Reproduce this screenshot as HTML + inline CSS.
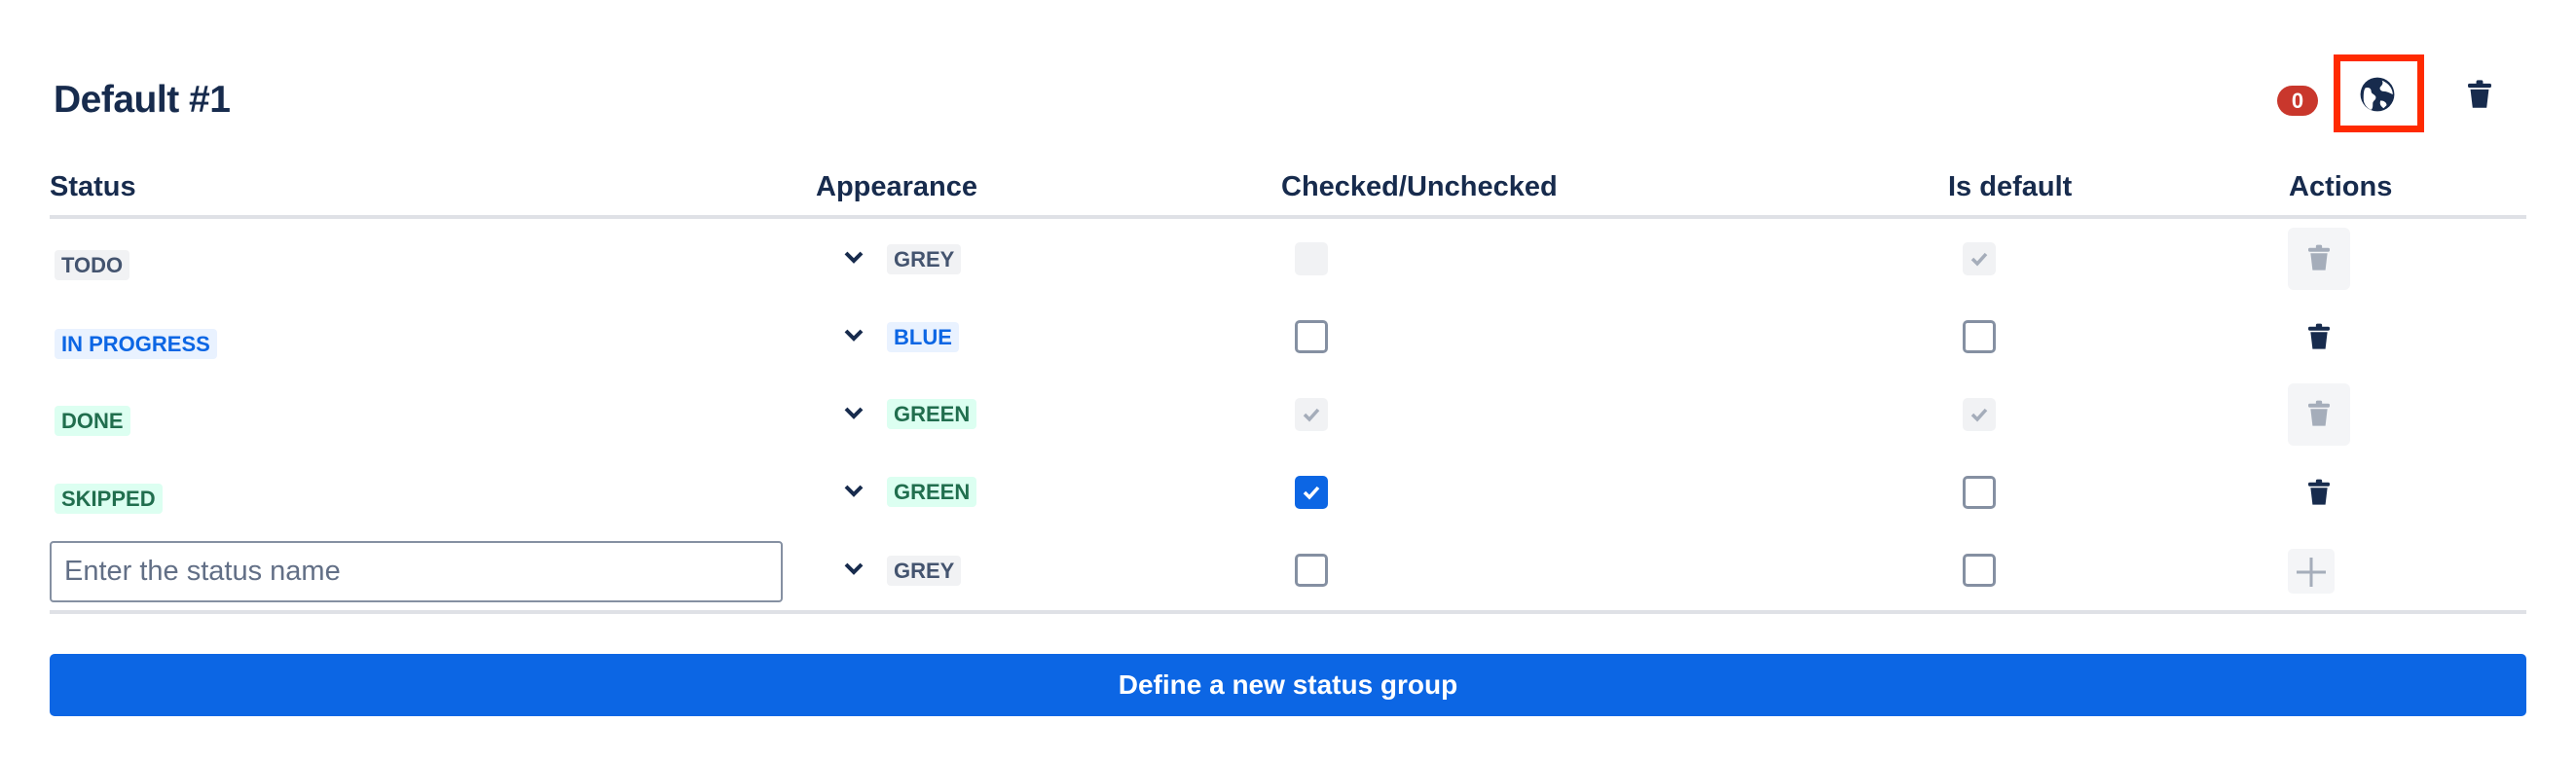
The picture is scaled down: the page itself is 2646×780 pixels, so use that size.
<!DOCTYPE html>
<html><head><meta charset="utf-8"><style>
*{box-sizing:border-box;margin:0;padding:0}
body{width:2646px;height:780px;background:#fff;font-family:"Liberation Sans",sans-serif;color:#172b4d;position:relative;overflow:hidden}
.a{position:absolute}
h1{position:absolute;left:55px;top:81px;font-size:39px;font-weight:bold;letter-spacing:-0.5px}
.th{position:absolute;top:176px;font-size:29px;font-weight:bold}
.line{position:absolute;left:51px;width:2544px;height:4px;background:#dfe1e6}
.loz{position:absolute;height:31px;line-height:31px;padding:0 7px;border-radius:4px;font-size:22px;font-weight:bold;text-transform:uppercase}
.g{background:#f1f2f4;color:#44546f}.b{background:#e9f2ff;color:#0c66e4}.gr{background:#dcfff1;color:#216e4e}
.cb{position:absolute;width:34px;height:34px;border:3px solid #8590a2;border-radius:5px;background:#fff}
.cbd{position:absolute;width:34px;height:34px;border-radius:5px;background:#f1f2f4}
.cbc{position:absolute;width:34px;height:34px;border-radius:5px;background:#0c66e4}
.box{position:absolute;width:64px;height:64px;border-radius:6px;background:#f4f5f7}
</style></head><body>
<h1>Default #1</h1>
<div class="a" style="left:2339px;top:88px;width:42px;height:31px;border-radius:16px;background:#c9372c;color:#fff;font-weight:bold;font-size:22px;text-align:center;line-height:31px">0</div>
<div class="a" style="left:2397px;top:56px;width:93px;height:80px;border:7px solid #ff2a00"></div>
<svg class="a" style="left:2423px;top:77px" width="38" height="40" viewBox="0 0 24 24"><circle cx="12" cy="12" r="11" fill="#172b4d"/><path d="M4 8c2-1 4 0 4 2s3 2 3 4-2 2-2 4 0 3-1 4c-3-1-5-4-5-7 0-3 0-5 1-7zM15 3c1 2 0 3-1 4s0 3 2 3 4 1 6 2c0-3-2-7-7-9zM14 16c2 0 4 1 4 3l-2 2c-1-1-3-2-2-5z" fill="#fff"/></svg>
<svg class="a" style="left:2535px;top:82px" width="24" height="30" viewBox="0 0 14 17"><rect x="0" y="2" width="14" height="2.5" rx="1" fill="#172b4d"/><rect x="5" y="0" width="4" height="3" rx="1" fill="#172b4d"/><path d="M1.5 5.5h11l-1.3 11H2.8z" fill="#172b4d"/></svg>

<div class="th" style="left:51px">Status</div>
<div class="th" style="left:838px">Appearance</div>
<div class="th" style="left:1316px">Checked/Unchecked</div>
<div class="th" style="left:2001px">Is default</div>
<div class="th" style="left:2351px">Actions</div>
<div class="line" style="top:221px"></div>

<div class="loz g" style="left:56px;top:257px">TODO</div>
<div class="loz b" style="left:56px;top:338px">IN PROGRESS</div>
<div class="loz gr" style="left:56px;top:417px">DONE</div>
<div class="loz gr" style="left:56px;top:497px">SKIPPED</div>
<div class="a" style="left:51px;top:556px;width:753px;height:63px;border:2px solid #8590a2;border-radius:4px;font-size:29px;color:#626f86;padding-left:13px;line-height:58px">Enter the status name</div>

<svg class="a" style="left:867px;top:258px" width="20" height="14" viewBox="0 0 10 7"><path d="M1 1l4 4 4-4" stroke="#172b4d" stroke-width="2" fill="none"/></svg>
<svg class="a" style="left:867px;top:338px" width="20" height="14" viewBox="0 0 10 7"><path d="M1 1l4 4 4-4" stroke="#172b4d" stroke-width="2" fill="none"/></svg>
<svg class="a" style="left:867px;top:418px" width="20" height="14" viewBox="0 0 10 7"><path d="M1 1l4 4 4-4" stroke="#172b4d" stroke-width="2" fill="none"/></svg>
<svg class="a" style="left:867px;top:498px" width="20" height="14" viewBox="0 0 10 7"><path d="M1 1l4 4 4-4" stroke="#172b4d" stroke-width="2" fill="none"/></svg>
<svg class="a" style="left:867px;top:578px" width="20" height="14" viewBox="0 0 10 7"><path d="M1 1l4 4 4-4" stroke="#172b4d" stroke-width="2" fill="none"/></svg>
<div class="loz g" style="left:911px;top:251px">GREY</div>
<div class="loz b" style="left:911px;top:331px">BLUE</div>
<div class="loz gr" style="left:911px;top:410px">GREEN</div>
<div class="loz gr" style="left:911px;top:490px">GREEN</div>
<div class="loz g" style="left:911px;top:571px">GREY</div>

<div class="cbd" style="left:1330px;top:249px"></div>
<div class="cb" style="left:1330px;top:329px"></div>
<div class="cbd" style="left:1330px;top:409px"><svg width="34" height="34" viewBox="0 0 34 34"><path d="M10 17l5 5 9-10" stroke="#a5adba" stroke-width="3.5" fill="none"/></svg></div>
<div class="cbc" style="left:1330px;top:489px"><svg width="34" height="34" viewBox="0 0 34 34"><path d="M10 17l5 5 9-10" stroke="#fff" stroke-width="3.5" fill="none"/></svg></div>
<div class="cb" style="left:1330px;top:569px"></div>

<div class="cbd" style="left:2016px;top:249px"><svg width="34" height="34" viewBox="0 0 34 34"><path d="M10 17l5 5 9-10" stroke="#a5adba" stroke-width="3.5" fill="none"/></svg></div>
<div class="cb" style="left:2016px;top:329px"></div>
<div class="cbd" style="left:2016px;top:409px"><svg width="34" height="34" viewBox="0 0 34 34"><path d="M10 17l5 5 9-10" stroke="#a5adba" stroke-width="3.5" fill="none"/></svg></div>
<div class="cb" style="left:2016px;top:489px"></div>
<div class="cb" style="left:2016px;top:569px"></div>

<div class="box" style="left:2350px;top:234px"></div>
<svg class="a" style="left:2371px;top:251px" width="22" height="28" viewBox="0 0 14 17"><rect x="0" y="2" width="14" height="2.5" rx="1" fill="#a5adba"/><rect x="5" y="0" width="4" height="3" rx="1" fill="#a5adba"/><path d="M1.5 5.5h11l-1.3 11H2.8z" fill="#a5adba"/></svg>
<svg class="a" style="left:2371px;top:332px" width="22" height="28" viewBox="0 0 14 17"><rect x="0" y="2" width="14" height="2.5" rx="1" fill="#172b4d"/><rect x="5" y="0" width="4" height="3" rx="1" fill="#172b4d"/><path d="M1.5 5.5h11l-1.3 11H2.8z" fill="#172b4d"/></svg>
<div class="box" style="left:2350px;top:394px"></div>
<svg class="a" style="left:2371px;top:411px" width="22" height="28" viewBox="0 0 14 17"><rect x="0" y="2" width="14" height="2.5" rx="1" fill="#a5adba"/><rect x="5" y="0" width="4" height="3" rx="1" fill="#a5adba"/><path d="M1.5 5.5h11l-1.3 11H2.8z" fill="#a5adba"/></svg>
<svg class="a" style="left:2371px;top:492px" width="22" height="28" viewBox="0 0 14 17"><rect x="0" y="2" width="14" height="2.5" rx="1" fill="#172b4d"/><rect x="5" y="0" width="4" height="3" rx="1" fill="#172b4d"/><path d="M1.5 5.5h11l-1.3 11H2.8z" fill="#172b4d"/></svg>
<div class="a" style="left:2350px;top:564px;width:48px;height:46px;border-radius:5px;background:#f4f5f7"></div>
<svg class="a" style="left:2356px;top:570px" width="36" height="36" viewBox="0 0 36 36"><path d="M18 3v30M3 18h30" stroke="#a5adba" stroke-width="3"/></svg>

<div class="line" style="top:627px"></div>
<div class="a" style="left:51px;top:672px;width:2544px;height:64px;background:#0c66e4;border-radius:5px;color:#fff;font-size:28px;font-weight:bold;text-align:center;line-height:64px">Define a new status group</div>
</body></html>
